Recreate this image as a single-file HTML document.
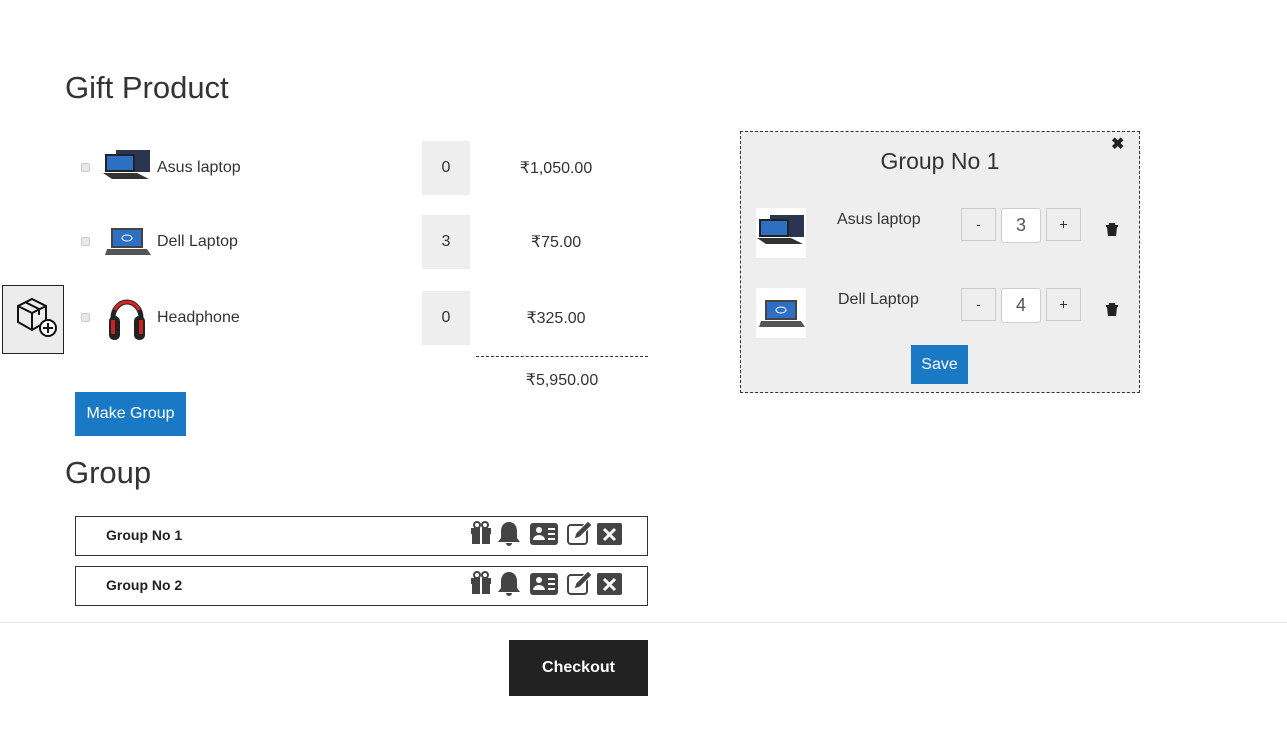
<!DOCTYPE html>
<html><head><meta charset="utf-8"><style>
*{margin:0;padding:0;box-sizing:border-box}
body{width:1287px;height:732px;background:#fff;font-family:"Liberation Sans",sans-serif;color:#333;position:relative;overflow:hidden}
.a{position:absolute}
.h{font-size:31px;color:#333;font-weight:normal}
.t{font-size:16px;color:#333}
.q{background:#eee;width:48px;height:54px;text-align:center;line-height:54px;font-size:16px}
.p{width:160px;text-align:center;font-size:16px}
.cb{width:9px;height:9px;border:1px solid #ccc;background:#e8e8e8;border-radius:2px}
.grp{border:1px solid #333;width:573px;height:40px}
.grp b{position:absolute;left:30px;top:10px;font-size:14px;color:#222}
.btn{border:1px solid #ccc;background:#eee;width:35px;height:33px;text-align:center;line-height:31px;font-size:14px}
.in{border:1px solid #ccc;background:#fff;width:40px;height:35px;text-align:center;line-height:33px;font-size:18px;border-radius:3px;color:#555}
</style></head><body>
<svg width="0" height="0" style="position:absolute"><defs>
<g id="lap"><path d="M14 2h34v22H14z" fill="#2a3550"/><path d="M3 6h30v18H3z" fill="#222"/><path d="M5 8h26v14H5z" fill="#2d6fc2"/><path d="M1 25h34l12 6H10z" fill="#333"/></g>
<g id="dell"><path d="M8 2h32v20H8z" fill="#444"/><path d="M10 4h28v16H10z" fill="#2d6fc2"/><ellipse cx="24" cy="12" rx="5" ry="3" fill="none" stroke="#fff"/><path d="M4 23h40l4 6H2z" fill="#555"/></g>
</defs></svg>
<div class="a h" style="left:65px;top:70px">Gift Product</div>

<div class="a cb" style="left:81px;top:163px"></div>
<svg class="a" style="left:102px;top:148px" width="50" height="36"><use href="#lap"/></svg>
<div class="a t" style="left:157px;top:159px">Asus laptop</div>
<div class="a q" style="left:422px;top:141px">0</div>
<div class="a p" style="left:476px;top:158px">₹1,050.00</div>

<div class="a cb" style="left:81px;top:237px"></div>
<svg class="a" style="left:103px;top:226px" width="50" height="32"><use href="#dell"/></svg>
<div class="a t" style="left:157px;top:233px">Dell Laptop</div>
<div class="a q" style="left:422px;top:215px">3</div>
<div class="a p" style="left:476px;top:232px">₹75.00</div>

<div class="a" style="left:2px;top:285px;width:62px;height:69px;border:1px solid #222;background:#ececec"></div>
<svg class="a" style="left:14px;top:296px" width="44" height="44" fill="none" stroke="#111" stroke-width="2"><path d="M4 10l14-7 14 7v16l-14 8-14-8z M4 10l14 7 14-7 M18 17v17 M11 6l14 7v6"/><circle cx="34" cy="32" r="8" fill="#fff"/><path d="M34 27v10M29 32h10"/></svg>
<div class="a cb" style="left:81px;top:313px"></div>
<svg class="a" style="left:107px;top:292px" width="40" height="52"><path d="M6 26a14 16 0 0 1 28 0" fill="none" stroke="#222" stroke-width="5"/><path d="M8 18a13 13 0 0 1 24 0" fill="none" stroke="#d22" stroke-width="3"/><rect x="2" y="24" width="11" height="24" rx="5" fill="#222"/><rect x="27" y="24" width="11" height="24" rx="5" fill="#222"/><rect x="4" y="28" width="4" height="14" fill="#c22"/><rect x="32" y="28" width="4" height="14" fill="#c22"/></svg>
<div class="a t" style="left:157px;top:309px">Headphone</div>
<div class="a q" style="left:422px;top:291px">0</div>
<div class="a p" style="left:476px;top:308px">₹325.00</div>
<div class="a" style="left:476px;top:356px;width:172px;border-top:1px dashed #333"></div>
<div class="a p" style="left:482px;top:370px">₹5,950.00</div>

<div class="a" style="left:75px;top:392px;width:111px;height:44px;background:#1a79c4;color:#fff;font-size:16px;text-align:center;line-height:44px">Make Group</div>
<div class="a h" style="left:65px;top:455px">Group</div>

<div class="a grp" style="left:75px;top:516px"><b>Group No 1</b></div>
<div class="a grp" style="left:75px;top:566px"><b>Group No 2</b></div>
<svg class="a" style="left:468px;top:518px" width="160" height="90" fill="#444">
<g id="ic">
<path d="M3 10h20v6H3z M4 16h18v10H4z" /><path d="M12 10v16h2V10z" fill="#fff"/><circle cx="9" cy="7" r="3" fill="none" stroke="#444" stroke-width="2"/><circle cx="17" cy="7" r="3" fill="none" stroke="#444" stroke-width="2"/>
<path d="M41 4c-5 0-8 4-8 9v7l-3 4h22l-3-4v-7c0-5-3-9-8-9z M38 25a3 3 0 0 0 6 0z"/>
<rect x="62" y="5" width="28" height="22" rx="3"/><circle cx="71" cy="12" r="3" fill="#fff"/><path d="M65 22a6 5 0 0 1 12 0z M80 10h7v2h-7z M80 15h7v2h-7z M80 20h7v2h-7z" fill="#fff"/>
<rect x="100" y="7" width="19" height="19" rx="3" fill="none" stroke="#444" stroke-width="2"/><path d="M106 21l2-6 12-12 4 4-12 12z" stroke="#fff" stroke-width="1"/>
<rect x="129" y="5" width="25" height="22" rx="2"/><path d="M136 11l11 11M147 11l-11 11" stroke="#fff" stroke-width="3"/>
</g>
<use href="#ic" y="50"/>
</svg>

<div class="a" style="left:740px;top:131px;width:400px;height:262px;border:1px dashed #333;background:#eee"></div>
<div class="a" style="left:1111px;top:134px;font-size:16px;font-weight:bold;color:#222">✖</div>
<div class="a" style="left:740px;top:148px;width:400px;text-align:center;font-size:23px;color:#333">Group No 1</div>
<div class="a" style="left:756px;top:208px;width:50px;height:50px;background:#fff"></div>
<svg class="a" style="left:756px;top:213px" width="50" height="36"><use href="#lap"/></svg>
<div class="a t" style="left:837px;top:211px">Asus laptop</div>
<div class="a btn" style="left:961px;top:208px">-</div>
<div class="a in" style="left:1001px;top:208px">3</div>
<div class="a btn" style="left:1046px;top:208px">+</div>
<div class="a" style="left:756px;top:288px;width:50px;height:50px;background:#fff"></div>
<svg class="a" style="left:757px;top:298px" width="50" height="32"><use href="#dell"/></svg>
<div class="a t" style="left:838px;top:291px">Dell Laptop</div>
<div class="a btn" style="left:961px;top:288px">-</div>
<div class="a in" style="left:1001px;top:288px">4</div>
<div class="a btn" style="left:1046px;top:288px">+</div>
<svg class="a" style="left:1105px;top:222px" width="14" height="100" fill="#222"><path d="M1 3h12v2H1z M4 1h6v2H4z M2 5h10l-1 9H3z"/><path d="M1 83h12v2H1z M4 81h6v2H4z M2 85h10l-1 9H3z"/></svg>
<div class="a" style="left:911px;top:345px;width:57px;height:39px;background:#1a79c4;color:#fff;font-size:16px;text-align:center;line-height:39px">Save</div>

<div class="a" style="left:0;top:622px;width:1287px;border-top:1px solid #e5e5e5"></div>
<div class="a" style="left:509px;top:640px;width:139px;height:56px;background:#222;color:#fff;font-weight:bold;font-size:16px;text-align:center;line-height:56px">Checkout</div>
</body></html>
